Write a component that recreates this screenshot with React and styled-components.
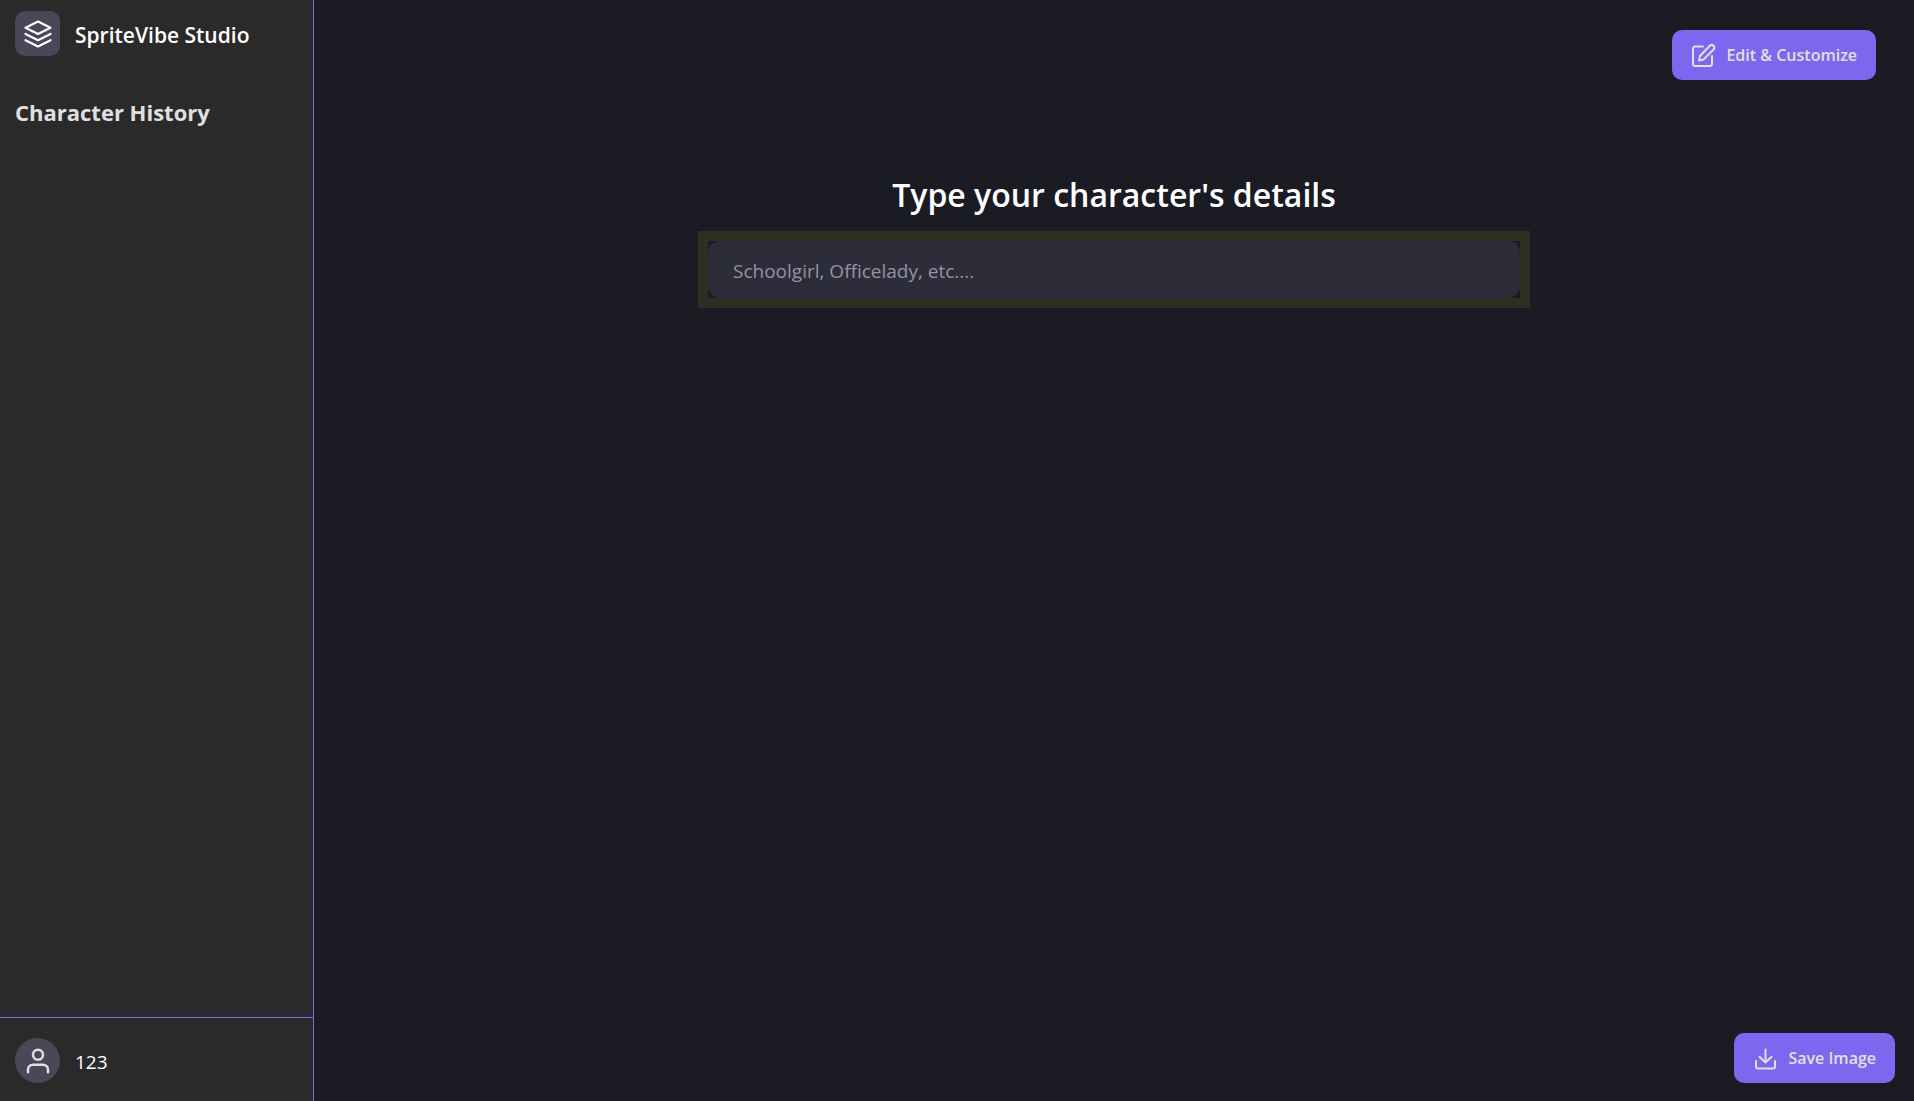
import styled, { createGlobalStyle } from 'styled-components';
import { FiLayers, FiUser } from 'react-icons/fi';

const accent = '#7b68ee';

const GlobalStyle = createGlobalStyle`
  * {
    box-sizing: border-box;
  }

  body {
    margin: 0;
    color: #fff;
    background-color: #1b1b24;
    font-family: 'Open Sans', 'Noto Sans', sans-serif;
  }
`;

const Page = styled.div`
  display: flex;
  min-height: 100vh;
`;

const Sidebar = styled.aside`
  width: 314px;
  flex-shrink: 0;
  display: flex;
  flex-direction: column;
  background-color: #2a2a2a;
  border-right: 1px solid ${accent};
`;

const Brand = styled.header`
  display: flex;
  align-items: center;
  gap: 15px;
  padding: 11px 15px;
`;

const IconBox = styled.div`
  width: 45px;
  height: 45px;
  display: flex;
  align-items: center;
  justify-content: center;
  color: ${({ $round }) => ($round ? '#e0e0e0' : '#fff')};
  background-color: #4a4858;
  border-radius: ${({ $round }) => ($round ? '50%' : '10px')};
`;

const BrandName = styled.h1`
  margin: 0;
  padding-top: 2px;
  font-size: 21px;
  font-weight: 600;
  line-height: 28px;
`;

const History = styled.section`
  flex: 1;
  padding: 30px 15px;
`;

const HistoryTitle = styled.h2`
  margin: 0;
  color: #e0e0e0;
  font-size: 22px;
  font-weight: 700;
  line-height: 30px;
`;

const Profile = styled.footer`
  display: flex;
  align-items: center;
  gap: 15px;
  padding: 20px 15px 18px;
  border-top: 1px solid ${accent};
`;

const ProfileName = styled.span`
  padding-top: 2px;
  font-size: 19px;
  line-height: 28px;
`;

const Main = styled.main`
  flex: 1;
  display: flex;
  flex-direction: column;
`;

const Toolbar = styled.div`
  display: flex;
  justify-content: flex-end;
  padding: ${({ $bottom }) => ($bottom ? '0 19px 18px' : '30px 38px 0')};
`;

const ActionButton = styled.button`
  height: 50px;
  display: flex;
  align-items: center;
  gap: 10px;
  padding: 0 19px;
  border: none;
  border-radius: 10px;
  cursor: pointer;
  color: #e0e0e0;
  background-color: ${accent};
  font-family: inherit;
  font-size: 16px;
  font-weight: 600;
`;

const ButtonIcon = styled.svg`
  width: 25px;
  height: 25px;
  fill: none;
  stroke: currentColor;
  stroke-width: 2;
  stroke-linecap: round;
  stroke-linejoin: round;
`;

const Form = styled.form`
  flex: 1;
  display: flex;
  flex-direction: column;
  align-items: center;
  padding-top: 91px;
`;

const FormLabel = styled.label`
  font-size: 32px;
  font-weight: 600;
  line-height: 48px;
`;

const InputFrame = styled.div`
  width: 52%;
  margin-top: 12px;
  border: 10px solid #2e2e22;
`;

const DetailsInput = styled.input`
  display: block;
  width: 100%;
  height: 57px;
  padding: 2px 25px 0;
  border: none;
  border-radius: 12px;
  outline: none;
  color: #fff;
  background-color: #2d2d39;
  font-family: inherit;
  font-size: 19px;

  &::placeholder {
    color: #9492a8;
    opacity: 1;
  }
`;

const EditIcon = () => (
  <ButtonIcon viewBox='0 0 25 25' aria-hidden='true'>
    <path d='M12 3.5H4a2 2 0 0 0-2 2V21a2 2 0 0 0 2 2h15a2 2 0 0 0 2-2v-8' />
    <path d='M18.8 2.8a2.6 2.6 0 0 1 3.7 3.7L12.5 16.500l-4.500 1 1-4.500z' />
  </ButtonIcon>
);

const DownloadIcon = () => (
  <ButtonIcon viewBox='0 0 25 25' aria-hidden='true'>
    <path d='M3 15v5.500a2 2 0 0 0 2 2h15a2 2 0 0 0 2-2V15' />
    <path d='M12.500 3.500v13M6.500 10.800l6 5.700 6-5.700' />
  </ButtonIcon>
);

const App = () => {
  return (
    <>
      <GlobalStyle />
      <Page>
        <Sidebar>
          <Brand>
            <IconBox>
              <FiLayers size={30} strokeWidth={1.75} />
            </IconBox>
            <BrandName>SpriteVibe Studio</BrandName>
          </Brand>
          <History>
            <HistoryTitle>Character History</HistoryTitle>
          </History>
          <Profile>
            <IconBox $round>
              <FiUser size={30} />
            </IconBox>
            <ProfileName>123</ProfileName>
          </Profile>
        </Sidebar>
        <Main>
          <Toolbar>
            <ActionButton type='button'>
              <EditIcon />
              Edit &amp; Customize
            </ActionButton>
          </Toolbar>
          <Form onSubmit={(e) => e.preventDefault()}>
            <FormLabel htmlFor='details'>Type your character's details</FormLabel>
            <InputFrame>
              <DetailsInput id='details' type='text' placeholder='Schoolgirl, Officelady, etc....' />
            </InputFrame>
          </Form>
          <Toolbar $bottom>
            <ActionButton type='button'>
              <DownloadIcon />
              Save Image
            </ActionButton>
          </Toolbar>
        </Main>
      </Page>
    </>
  );
};

export default App;
